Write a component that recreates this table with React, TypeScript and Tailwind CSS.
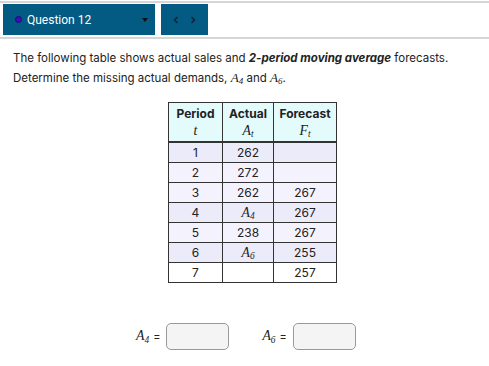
import React from 'react';

function M({ b, s }: { b: string; s?: string }) {
  return (
    <span className="font-['Liberation_Serif',serif] italic text-[1.15em]">
      {b}
      {s && <sub className="text-[0.68em]">{s}</sub>}
    </span>
  );
}

const rows: { t: string; a: React.ReactNode; f: string; bg: string }[] = [
  { t: '1', a: '262', f: '', bg: 'bg-[#ecebfa]' },
  { t: '2', a: '272', f: '', bg: 'bg-[#f4f3fd]' },
  { t: '3', a: '262', f: '267', bg: 'bg-[#f4f3fd]' },
  { t: '4', a: <M b="A" s="4" />, f: '267', bg: 'bg-[#ecebfa]' },
  { t: '5', a: '238', f: '267', bg: 'bg-[#f4f3fd]' },
  { t: '6', a: <M b="A" s="6" />, f: '255', bg: 'bg-[#ecebfa]' },
  { t: '7', a: '', f: '257', bg: 'bg-white' },
];

export default function App() {
  return (
    <div className="w-[489px] h-[366px] bg-white text-[#222] font-['Inter',sans-serif] overflow-hidden">
      <div className="mt-px border-t-2 border-b-2 border-[#d6d6d6] pt-px pb-[2px] pl-[3px] flex gap-[6px]">
        <div className="w-[152px] h-[31px] bg-[#035a82] flex items-center pl-[12px] pr-[6px]">
          <span className="w-[7px] h-[7px] rounded-full bg-[#3b0fbf] border border-[#1d0a70]" />
          <span className="ml-[5px] text-white text-[12px] font-['Roboto',sans-serif]">Question 12</span>
          <svg className="ml-auto" width="8" height="6" viewBox="0 0 8 6">
            <path d="M1 1 L7 1 L4 5 Z" fill="#111" />
          </svg>
        </div>
        <div className="w-[47px] h-[31px] bg-[#035a82] flex items-center justify-around px-[6px]">
          <svg width="6" height="8" viewBox="0 0 6 8">
            <path d="M4.5 1 L1.5 4 L4.5 7" stroke="#102230" strokeWidth="1.4" fill="none" />
          </svg>
          <svg width="6" height="8" viewBox="0 0 6 8">
            <path d="M1.5 1 L4.5 4 L1.5 7" stroke="#102230" strokeWidth="1.4" fill="none" />
          </svg>
        </div>
      </div>

      <p className="mt-[10px] px-[13px] text-[11.5px] leading-[19px] whitespace-nowrap">
        The following table shows actual sales and <b><i>2-period moving average</i></b> forecasts.
        <br />
        Determine the missing actual demands, <M b="A" s="4" /> and <M b="A" s="6" />.
      </p>

      <div className="mt-[14px] pl-[168px]">
        <table className="border-collapse table-fixed text-[12px] text-center w-[168px]">
          <colgroup>
            <col className="w-[54px]" />
            <col className="w-[51px]" />
            <col className="w-[63px]" />
          </colgroup>
          <thead>
            <tr className="bg-[#e3fbfb]">
              <th className="border border-[#333] border-b-2 font-bold py-[2px] leading-[17px]">
                Period
                <br />
                <span className="font-normal"><M b="t" /></span>
              </th>
              <th className="border border-[#333] border-b-2 font-bold py-[2px] leading-[17px]">
                Actual
                <br />
                <span className="font-normal"><M b="A" s="t" /></span>
              </th>
              <th className="border border-[#333] border-b-2 font-bold py-[2px] leading-[17px]">
                Forecast
                <br />
                <span className="font-normal"><M b="F" s="t" /></span>
              </th>
            </tr>
          </thead>
          <tbody>
            {rows.map((r) => (
              <tr key={r.t} className={`${r.bg} h-[20px]`}>
                <td className="border border-[#333] leading-[19px]">{r.t}</td>
                <td className="border border-[#333] leading-[19px]">{r.a}</td>
                <td className="border border-[#333] leading-[19px]">{r.f}</td>
              </tr>
            ))}
          </tbody>
        </table>
      </div>

      <div className="flex items-center mt-[40px] pl-[136px] text-[12px]">
        <M b="A" s="4" />
        <span className="ml-[4px] text-[11px]">=</span>
        <div className="ml-[6px] w-[63px] h-[27px] rounded-[5px] border border-[#999] bg-[#f4f4f4]" />
        <div className="ml-[33px]">
          <M b="A" s="6" />
        </div>
        <span className="ml-[4px] text-[11px]">=</span>
        <div className="ml-[6px] w-[63px] h-[27px] rounded-[5px] border border-[#999] bg-[#f4f4f4]" />
      </div>
    </div>
  );
}
